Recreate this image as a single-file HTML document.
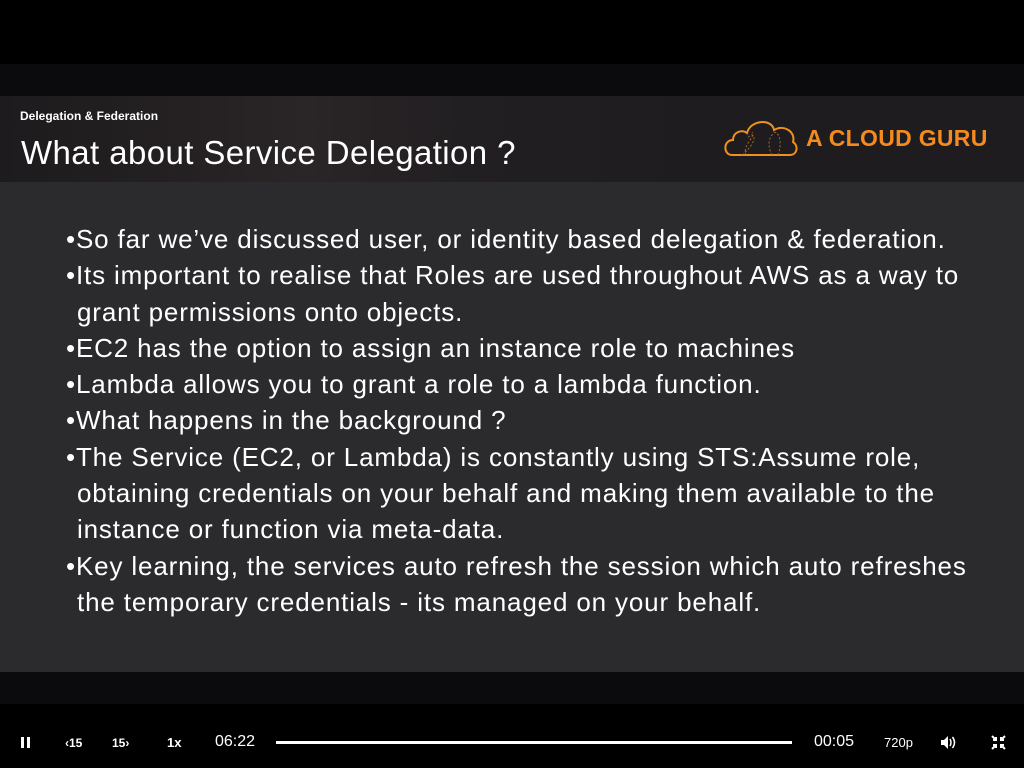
<!DOCTYPE html>
<html><head><meta charset="utf-8"><style>
*{margin:0;padding:0;box-sizing:border-box}
body{width:1024px;height:768px;background:#000;position:relative;overflow:hidden;font-family:"Liberation Sans",sans-serif;color:#fff}
.band1{position:absolute;left:0;top:64px;width:1024px;height:32px;background:#0b0a0c}
.hdr{position:absolute;left:0;top:96px;width:1024px;height:86px;background:linear-gradient(90deg,#1d1b1d 0%,#2a2526 30%,#221f22 45%,#1e1c1e 70%,#1e1c1e 100%)}
.body{position:absolute;left:0;top:182px;width:1024px;height:490px;background:#2b2a2c}
.band2{position:absolute;left:0;top:672px;width:1024px;height:32px;background:#0b0a0c}
.sub{position:absolute;left:20px;top:109px;font-size:12px;font-weight:bold;letter-spacing:0px}
.title{position:absolute;left:21px;top:134px;font-size:33px;letter-spacing:0.4px}
.logo{position:absolute;left:806px;top:125px;font-size:23px;font-weight:bold;color:#f58a1f;letter-spacing:0.3px}
.lines{position:absolute;left:66px;top:221px;font-size:26px;line-height:36.3px;letter-spacing:0.85px;white-space:nowrap}
.lines div{height:36.3px}
.ind{padding-left:11px}
.ctl{position:absolute;top:735px;font-size:14px;color:#fff}
</style></head><body>
<div class="band1"></div><div class="hdr"></div><div class="body"></div><div class="band2"></div>
<div class="sub">Delegation &amp; Federation</div>
<div class="title">What about Service Delegation ?</div>
<svg style="position:absolute;left:722px;top:118px" width="80" height="42" viewBox="0 0 80 42">
<path d="M10 37 C1 37 1 22 11 22 C11 14 20 11 25 15 C28 2 50 0 52 12 C62 6 74 14 71 24 C77 28 75 37 68 37 Z" fill="none" stroke="#f0901e" stroke-width="2"/>
<path d="M20 37 C40 20 30 12 26 20 M24 37 C20 26 34 20 30 14 M50 37 C44 26 48 16 54 14 M56 37 C60 26 58 18 54 14" fill="none" stroke="#a86a2a" stroke-width="1" stroke-dasharray="2 2"/>
</svg>
<div class="logo">A CLOUD GURU</div>
<div class="lines">
<div>•So far we’ve discussed user, or identity based delegation &amp; federation.</div>
<div>•Its important to realise that Roles are used throughout AWS as a way to</div>
<div class="ind">grant permissions onto objects.</div>
<div>•EC2 has the option to assign an instance role to machines</div>
<div>•Lambda allows you to grant a role to a lambda function.</div>
<div>•What happens in the background ?</div>
<div>•The Service (EC2, or Lambda) is constantly using STS:Assume role,</div>
<div class="ind">obtaining credentials on your behalf and making them available to the</div>
<div class="ind">instance or function via meta-data.</div>
<div>•Key learning, the services auto refresh the session which auto refreshes</div>
<div class="ind">the temporary credentials - its managed on your behalf.</div>
</div>
<div style="position:absolute;left:21px;top:737px;width:3px;height:11px;background:#fff"></div>
<div style="position:absolute;left:27px;top:737px;width:3px;height:11px;background:#fff"></div>
<div class="ctl" style="left:65px;font-size:12px;top:736px;font-weight:bold">‹15</div>
<div class="ctl" style="left:112px;font-size:12px;top:736px;font-weight:bold">15›</div>
<div class="ctl" style="left:167px;font-size:13px;top:735px;font-weight:bold">1x</div>
<div class="ctl" style="left:215px;font-size:16px;top:733px">06:22</div>
<div style="position:absolute;left:276px;top:741px;width:516px;height:3px;background:#fff"></div>
<div class="ctl" style="left:814px;font-size:16px;top:733px">00:05</div>
<div class="ctl" style="left:884px;font-size:13px;top:735px">720p</div>
<svg style="position:absolute;left:940px;top:735px" width="18" height="15" viewBox="0 0 18 15"><path d="M1 5h3l4-4v13l-4-4H1z" fill="#fff"/><path d="M10 4q2 3.5 0 7M12.5 2q4 5.5 0 11" stroke="#fff" stroke-width="1.5" fill="none"/></svg>
<svg style="position:absolute;left:991px;top:735px" width="15" height="15" viewBox="0 0 15 15"><path d="M1 1l4 4M5 2v3H2M14 1l-4 4M10 2v3h3M1 14l4-4M5 13v-3H2M14 14l-4-4M10 13v-3h3" stroke="#fff" stroke-width="2" fill="none"/></svg>
</body></html>
